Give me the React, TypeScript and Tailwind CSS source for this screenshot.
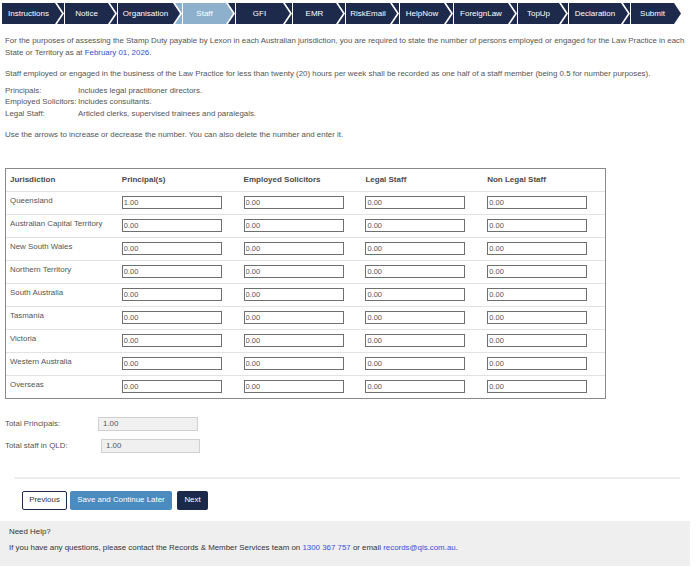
import { type ReactNode } from "react"

const tabs = [
  { label: "Instructions", w: 60, first: true },
  { label: "Notice", w: 58 },
  { label: "Organisation", w: 70 },
  { label: "Staff", w: 58, active: true },
  { label: "GFI", w: 62 },
  { label: "EMR", w: 58 },
  { label: "RiskEmail", w: 59 },
  { label: "HelpNow", w: 59 },
  { label: "ForeignLaw", w: 69 },
  { label: "TopUp", w: 56 },
  { label: "Declaration", w: 67 },
  { label: "Submit", w: 58 },
]

const rows = [
  ["Queensland", "1.00"],
  ["Australian Capital Territory", "0.00"],
  ["New South Wales", "0.00"],
  ["Northern Territory", "0.00"],
  ["South Australia", "0.00"],
  ["Tasmania", "0.00"],
  ["Victoria", "0.00"],
  ["Western Australia", "0.00"],
  ["Overseas", "0.00"],
]

const Field = ({ value }: { value: string }) => (
  <input
    type="text"
    defaultValue={value}
    className="h-[13px] w-[100px] border border-[#6f6f6f] bg-white px-[1px] text-[7.5px] text-[#555] outline-none"
  />
)

const Tab = ({
  label,
  w,
  first,
  active,
}: {
  label: string
  w: number
  first?: boolean
  active?: boolean
}) => (
  <div
    style={{ width: w }}
    className={`relative flex h-[21px] shrink-0 items-center text-[8px] text-white ${
      active ? "bg-[#8db1cd]" : "bg-[#1d2a4c]"
    } ${
      first
        ? "[clip-path:polygon(0_0,calc(100%_-_7px)_0,100%_50%,calc(100%_-_7px)_100%,0_100%)]"
        : "-ml-[5px] [clip-path:polygon(0_0,calc(100%_-_7px)_0,100%_50%,calc(100%_-_7px)_100%,0_100%,7px_50%)]"
    }`}
  >
    <div
      className={`flex h-full flex-1 items-center justify-center pr-[7px] ${
        first ? "" : "ml-[7px] border-l border-white"
      }`}
    >
      {label}
    </div>
  </div>
)

const Cell = ({ children, w }: { children: ReactNode; w: string }) => (
  <div className={`flex items-center pl-[4px] ${w}`}>{children}</div>
)

export default function App() {
  return (
    <main className="min-h-[569px] bg-white font-['Liberation_Sans',Arial,sans-serif] text-[7.9px] leading-[11.5px] text-[#555]">
      <nav className="flex pl-[2px] pt-[3px]">
        {tabs.map((t) => (
          <Tab key={t.label} {...t} />
        ))}
      </nav>

      <section className="px-[5px]">
        <p className="mt-[11px] leading-[12px]">
          <span className="whitespace-nowrap">
            For the purposes of assessing the Stamp Duty payable by Lexon in each Australian
            jurisdiction, you are required to state the number of persons employed or engaged
            for the Law Practice in each
          </span>
          <br />
          State or Territory as at <span className="text-[#3350d0]">February 01, 2026</span>.
        </p>
        <p className="mt-[9px]">
          Staff employed or engaged in the business of the Law Practice for less than twenty
          (20) hours per week shall be recorded as one half of a staff member (being 0.5 for
          number purposes).
        </p>
        <div className="mt-[5px] grid grid-cols-[73px_1fr] whitespace-nowrap">
          <span>Principals:</span>
          <span>Includes legal practitioner directors.</span>
          <span>Employed Solicitors:</span>
          <span>Includes consultants.</span>
          <span>Legal Staff:</span>
          <span>Articled clerks, supervised trainees and paralegals.</span>
        </div>
        <p className="mt-[10px]">
          Use the arrows to increase or decrease the number. You can also delete the number and
          enter it.
        </p>

        <div className="mt-[27px] w-[601px] border border-[#8a8a8a]">
          <div className="flex h-[22px] text-[8px] font-bold text-[#4a4a4a]">
            <Cell w="w-[112px]">Jurisdiction</Cell>
            <Cell w="w-[122px]">Principal(s)</Cell>
            <Cell w="w-[122px]">Employed Solicitors</Cell>
            <Cell w="w-[122px]">Legal Staff</Cell>
            <Cell w="w-[122px]">Non Legal Staff</Cell>
          </div>
          {rows.map(([name, p]) => (
            <div key={name} className="flex h-[23px] border-t border-[#e2e2e2]">
              <Cell w="w-[112px] pb-[3px]">{name}</Cell>
              <Cell w="w-[122px]">
                <Field value={p} />
              </Cell>
              <Cell w="w-[122px]">
                <Field value="0.00" />
              </Cell>
              <Cell w="w-[122px]">
                <Field value="0.00" />
              </Cell>
              <Cell w="w-[122px]">
                <Field value="0.00" />
              </Cell>
            </div>
          ))}
        </div>

        <div className="mt-[18px] flex items-center">
          <span className="w-[93px]">Total Principals:</span>
          <div className="flex h-[14px] w-[100px] items-center border border-[#d0d0d0] bg-[#f0f0f0] pl-[4px]">
            1.00
          </div>
        </div>
        <div className="mt-[8px] flex items-center">
          <span className="w-[96px]">Total staff in QLD:</span>
          <div className="flex h-[14px] w-[99px] items-center border border-[#d0d0d0] bg-[#f0f0f0] pl-[4px]">
            1.00
          </div>
        </div>
      </section>

      <div className="mx-[14px] mt-[24px] w-[666px] border-t-2 border-[#ececec]" />

      <div className="mt-[12px] flex gap-[3px] pl-[22px]">
        <button className="h-[19px] w-[45px] rounded-[2px] border border-[#1d2a4c] bg-white text-[7.9px] text-[#333]">
          Previous
        </button>
        <button className="h-[19px] w-[102px] rounded-[2px] bg-[#4a8bc0] text-[7.9px] text-white">
          Save and Continue Later
        </button>
        <button className="ml-[2px] h-[19px] w-[31px] rounded-[2px] bg-[#1b2a4b] text-[7.9px] text-white">
          Next
        </button>
      </div>

      <footer className="mr-[8px] mt-[11px] h-[45px] bg-[#efefef] px-[9px] pt-[5px] text-[#333]">
        <p>Need Help?</p>
        <p className="mt-[5px]">
          If you have any questions, please contact the Records &amp; Member Services team on{" "}
          <span className="text-[#3a4ee0]">1300 367 757</span> or email{" "}
          <span className="text-[#3a4ee0]">records@qls.com.au</span>.
        </p>
      </footer>
    </main>
  )
}
